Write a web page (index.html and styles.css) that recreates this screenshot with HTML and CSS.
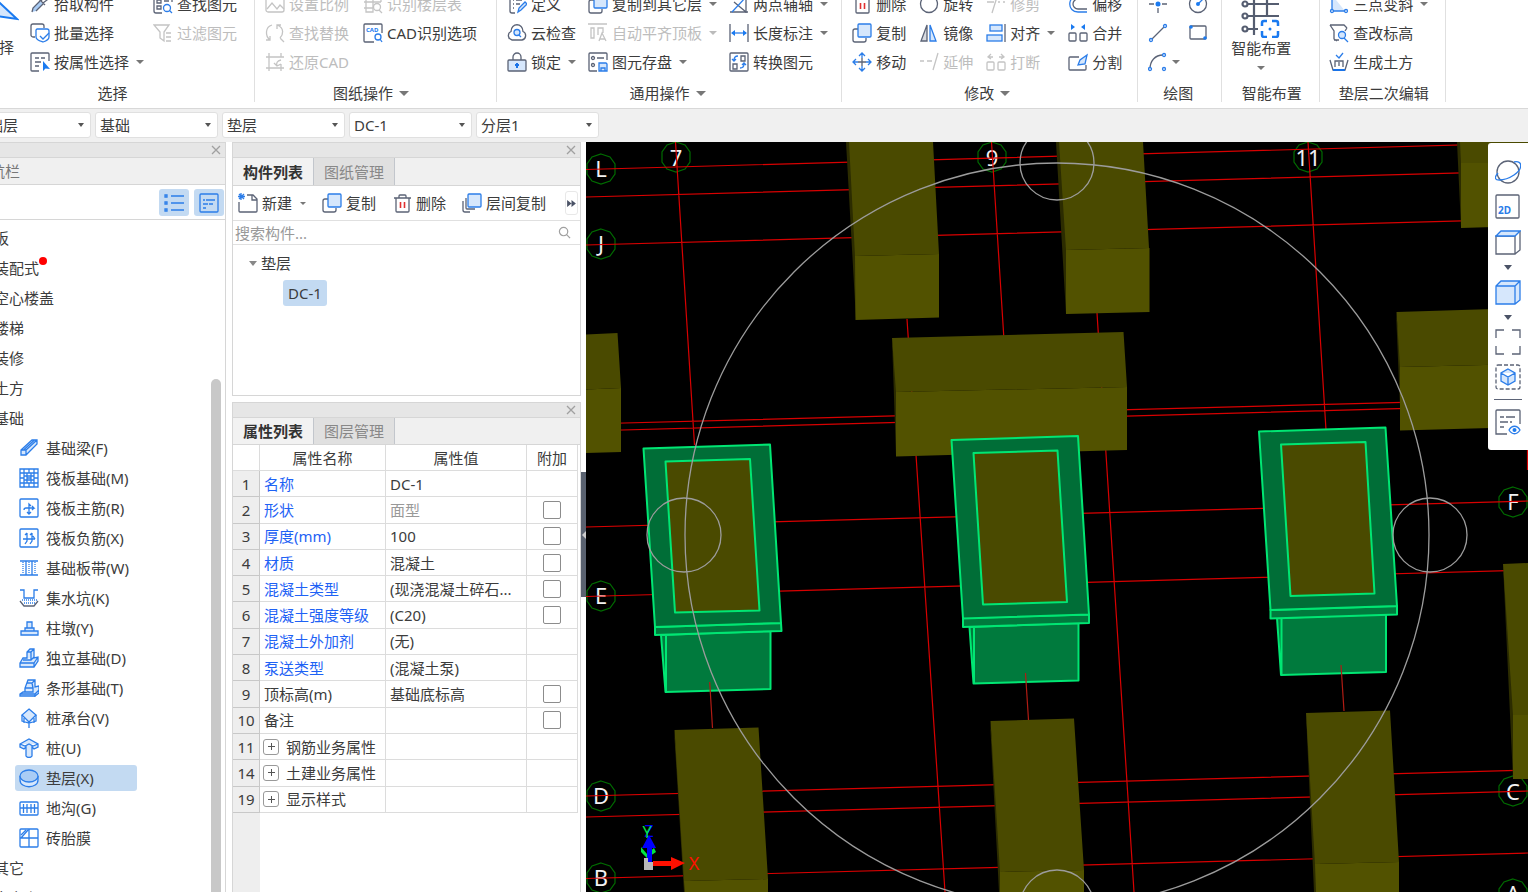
FILE: index.html
```html
<!DOCTYPE html>
<html lang="zh-CN">
<head>
<meta charset="utf-8">
<title>垫层建模</title>
<link rel="stylesheet" href="styles.css">
</head>
<body>
<svg class="sprite" aria-hidden="true">
  <defs>
    <symbol id="pick" viewBox="0 0 20 20"><path class="bf" d="M2 18l1-4 7-7 3 3-7 7z"/><path class="k" d="M9 5l6 6M11 7l3-4 3 3-4 3M2 18l1-4 7-7M6 17l7-7"/></symbol>
    <symbol id="batch" viewBox="0 0 20 20"><path class="k" d="M5 14H3a2 2 0 0 1-2-2V3a2 2 0 0 1 2-2h9a2 2 0 0 1 2 2v2"/><path class="b w" d="M7 6h10a2 2 0 0 1 2 2v6c0 3-3 4-6 5-3-1-7-2-7-5V7z"/><path class="b" d="M10 13l3 3 6-6"/></symbol>
    <symbol id="byattr" viewBox="0 0 20 20"><path class="k" d="M19 9V2a1 1 0 0 0-1-1H2a1 1 0 0 0-1 1v16a1 1 0 0 0 1 1h7M5 6h4M11 6h4M5 10h6M5 14h4"/><path class="bs" d="M13 9v10l2.500-2.500L20 17z"/></symbol>
    <symbol id="find" viewBox="0 0 20 20"><path class="k" d="M19 8V2H1v15a2 2 0 0 0 2 2h6M4 6h4v3H4zM4 12h4v3H4zM11 7h5"/><circle class="b" cx="14" cy="14" r="3.500"/><path class="b" d="M16.500 16.500L19 19"/></symbol>
    <symbol id="filter" viewBox="0 0 20 20"><path class="g" d="M1 2h15l-5 7v9l-4-3V9zM13 10h5M13 14h5M13 18h5"/></symbol>
    <symbol id="scale" viewBox="0 0 20 20"><rect class="g" x="1" y="2" width="18" height="16" rx="2"/><path class="g" d="M2 15l5-6 5 6 3-4 4 4"/></symbol>
    <symbol id="level" viewBox="0 0 20 20"><path class="g" d="M1 8h17M3 2h7v16H3zM18 2v6M1 14h9"/><circle class="g" cx="14" cy="13" r="3.500"/><path class="g" d="M16 16l3 3"/></symbol>
    <symbol id="swap" viewBox="0 0 20 20"><path class="g" d="M7 2C0 4 0 13 5 17M1 17h4v-4M12 2c8 3 6 10 3 13M12 6V2h4M15 15l4 4"/></symbol>
    <symbol id="cad" viewBox="0 0 20 20"><path class="k" d="M19 10V2a1 1 0 0 0-1-1H2a1 1 0 0 0-1 1v16a1 1 0 0 0 1 1h9"/><text class="tiny" x="3" y="9">CAD</text><circle class="b" cx="15" cy="14" r="3"/><path class="b" d="M17 16l2 3"/></symbol>
    <symbol id="restore" viewBox="0 0 20 20"><path class="g" d="M4 1v18M1 5h18M16 1v4M1 16h18M16 12v7M16 8c-4 1-5 3-4 6M9 11l3 3 4-2"/></symbol>
    <symbol id="define" viewBox="0 0 20 20"><path class="k" d="M15 2H3v15a2 2 0 0 0 2 2h3M6 6h1M9 6h6M6 10h1M9 10h4M6 14h1"/><path class="b f" d="M11 18l1-4 6-6 2 2-6 6z"/></symbol>
    <symbol id="cloud" viewBox="0 0 20 20"><path class="k" d="M5 17a4.500 4.500 0 0 1-1-8.500C4-.500 16-.500 16 8.500a4.500 4.500 0 0 1-1 8.500z"/><circle class="b f" cx="10" cy="9.500" r="3"/><path class="b" d="M12 12l2 2"/></symbol>
    <symbol id="lock" viewBox="0 0 20 20"><path class="k" d="M6 8V5a4 4 0 0 1 8 0v3"/><rect class="k f" x="1" y="8" width="18" height="11" rx="1"/><path class="b2" d="M10 11v5M8 13h4"/></symbol>
    <symbol id="copy" viewBox="0 0 20 20"><path class="k" d="M6 6H3a2 2 0 0 0-2 2v9a2 2 0 0 0 2 2h9a2 2 0 0 0 2-2v-2"/><rect class="b f" x="6" y="1" width="13" height="13" rx="1"/></symbol>
    <symbol id="flat" viewBox="0 0 20 20"><path class="g" d="M0 1h19M3 5h3v10H3zM10 12V5h5v5M11 18l3-8 4 8M12 16h5"/></symbol>
    <symbol id="save" viewBox="0 0 20 20"><path class="k" d="M19 8V2a1 1 0 0 0-1-1H2a1 1 0 0 0-1 1v16a1 1 0 0 0 1 1h7M9 6h7"/><circle class="k" cx="5" cy="6" r="1.500"/><circle class="k" cx="5" cy="13" r="1.500"/><path class="b f" d="M11 11h7l1 1v7h-8zM13 19v-3h4v3"/></symbol>
    <symbol id="axis" viewBox="0 0 20 20"><path class="k" d="M1 18h18M17 1v18M5 8l12 10"/><path class="b" d="M3 18L17 3"/></symbol>
    <symbol id="length" viewBox="0 0 20 20"><path class="k" d="M1 1v18M19 1v18"/><path class="b" d="M3 10h14"/><path class="bs" d="M2 10l4-3v6zM18 10l-4-3v6z"/></symbol>
    <symbol id="convert" viewBox="0 0 20 20"><rect class="k" x="1" y="1" width="18" height="18" rx="1"/><path class="k" d="M12 4h4v5h-4zM4 12h4v5H4z"/><path class="b" d="M9 4C6 4 5 6 5 8M3 7l2 2 2-2M11 16c3 0 4-2 4-4M13 13l2-2 2 2"/></symbol>
    <symbol id="trash" viewBox="0 0 20 20"><path class="k" d="M2 5h17M7 5V3a1 1 0 0 1 1-1h5a1 1 0 0 1 1 1v2M4 5v13a1 1 0 0 0 1 1h11a1 1 0 0 0 1-1V5"/><path class="r" d="M8.500 9v6M12.500 9v6"/></symbol>
    <symbol id="rotate" viewBox="0 0 20 20"><circle class="k" cx="10" cy="10" r="8.500"/></symbol>
    <symbol id="mirror" viewBox="0 0 20 20"><path class="k gf" d="M8 2v16H2z"/><path class="b f" d="M11 2v16h6z"/></symbol>
    <symbol id="move" viewBox="0 0 20 20"><path class="k" d="M10 6v8M6 10h8"/><path class="b" d="M10 1v5M7 4l3-3 3 3M10 19v-5M7 16l3 3 3-3M1 10h5M4 7l-3 3 3 3M19 10h-5M16 7l3 3-3 3"/></symbol>
    <symbol id="trim" viewBox="0 0 20 20"><path class="g" d="M1 8h7M12 8h2M17 8h2M11 3L6 19"/></symbol>
    <symbol id="extend" viewBox="0 0 20 20"><path class="g" d="M1 9h4M8 9h5M19 1l-5 17"/></symbol>
    <symbol id="align" viewBox="0 0 20 20"><rect class="b f" x="4" y="2" width="12" height="6"/><rect class="b f" x="1" y="12" width="15" height="6"/><path class="k" d="M19 1v18"/></symbol>
    <symbol id="break" viewBox="0 0 20 20"><rect class="g" x="1" y="10" width="7" height="8" rx="1"/><rect class="g" x="12" y="10" width="7" height="8" rx="1"/><path class="g" d="M7 5H3M5 2L2 5l3 2M13 5h4M15 2l3 3-3 2"/></symbol>
    <symbol id="offset" viewBox="0 0 20 20"><path class="k" d="M19 5h-9a5 5 0 0 0 0 10h9"/><path class="b" d="M19 2h-9C-1 2-1 18 10 18h9"/></symbol>
    <symbol id="merge" viewBox="0 0 20 20"><rect class="k" x="1" y="10" width="7" height="8" rx="1"/><rect class="k" x="12" y="10" width="7" height="8" rx="1"/><path class="bs" d="M3 1l4 3-4 3zM17 1l-4 3 4 3z"/></symbol>
    <symbol id="split" viewBox="0 0 20 20"><path class="k" d="M11 5H2a1 1 0 0 0-1 1v11a1 1 0 0 0 1 1h15a1 1 0 0 0 1-1v-4"/><path class="b f" d="M10 13l2-5 7-5-2 9z"/></symbol>
    <symbol id="point" viewBox="0 0 20 20"><path class="k" d="M10 0v6M10 14v5M1 10h5M14 10h5"/><circle class="bs" cx="10" cy="10" r="2.500"/></symbol>
    <symbol id="circle" viewBox="0 0 20 20"><circle class="k" cx="10" cy="10" r="8.500"/><path class="b" d="M10 10l6-6"/><circle class="bs" cx="10" cy="10" r="2"/></symbol>
    <symbol id="line" viewBox="0 0 20 20"><path class="k" d="M3 17L17 3"/><circle class="b w" cx="3" cy="17" r="1.500"/><circle class="b w" cx="17" cy="3" r="1.500"/></symbol>
    <symbol id="rect" viewBox="0 0 20 20"><rect class="k" x="2" y="3" width="16" height="13" rx="1"/><circle class="bs" cx="3" cy="4" r="1.800"/><circle class="bs" cx="17" cy="15" r="1.800"/></symbol>
    <symbol id="arc" viewBox="0 0 20 20"><path class="k" d="M2 17C2 9 7 3 15 3"/><circle class="b w" cx="2" cy="17" r="1.500"/><circle class="b w" cx="16" cy="3" r="1.500"/><circle class="b w" cx="16" cy="17" r="1.500"/></symbol>
    <symbol id="slope" viewBox="0 0 20 20"><path class="f" d="M3 1L16 17H3z"/><path class="b" d="M3 0v17h13"/><circle class="b w" cx="3" cy="17" r="1.500"/><circle class="b w" cx="17" cy="17" r="1.500"/></symbol>
    <symbol id="elev" viewBox="0 0 20 20"><path class="k" d="M1 2h14l3 3M1 2l4 6v8l3 2M18 5l-2 3M5 17h5"/><circle class="b f" cx="13" cy="12" r="3.500"/><path class="b" d="M15 15l4 4"/></symbol>
    <symbol id="earth" viewBox="0 0 20 20"><path class="k" d="M1 8l3 10h12l3-10M6 15V9h8v6M10 10v4"/><path class="b2" d="M4 18h12"/><path class="b" d="M7 3l3 3 4-5"/></symbol>
    <symbol id="x" viewBox="0 0 10 10"><path class="xk" d="M1 1l8 8M9 1L1 9"/></symbol>
    <symbol id="new" viewBox="0 0 20 20"><path class="k" d="M1 9v9a1 1 0 0 0 1 1h16a1 1 0 0 0 1-1V6l-4-4H9M14 2v5h5"/><path class="b" d="M3 0v7M0 3.500h7M1 1l5 5M6 1L1 6"/></symbol>
    <symbol id="layers" viewBox="0 0 20 20"><path class="k" d="M4 5v10a1 1 0 0 0 1 1h8M1 8v9a2 2 0 0 0 2 2h5"/><rect class="b f" x="6" y="1" width="13" height="13" rx="1"/></symbol>
    <symbol id="mag" viewBox="0 0 14 14"><circle class="xk" cx="6" cy="6" r="4.500"/><path class="xk" d="M9 9l4 4"/></symbol>
    <symbol id="n1" viewBox="0 0 20 20"><path class="b f" d="M2 12L13 2h5v4L7 17H2zM2 12h5v5M7 12L18 2M4.500 12L15.500 2"/></symbol>
    <symbol id="n2" viewBox="0 0 20 20"><path class="b" d="M1 1h18v18H1zM1 5h18M1 10h4M8 10h4M15 10h4M1 15h18M5 1v18M10 1v4M10 15v4M15 1v18M8 5v10M12 5v10M5 8h10M5 12h10"/></symbol>
    <symbol id="n3" viewBox="0 0 20 20"><rect class="b" x="1" y="1" width="18" height="18" rx="1"/><path class="b" d="M10 15V6l2 2M5 12c0-2 1-2 2-2h8l-2-2M15 10l-2 2M8 14l2 2 2-2"/></symbol>
    <symbol id="n4" viewBox="0 0 20 20"><rect class="b" x="1" y="1" width="18" height="18" rx="1"/><path class="b" d="M4 11h12M8 5v8l-2 3M13 5v8l-2 3M6 7l2-2M11 7l2-2M14 8l2 3"/></symbol>
    <symbol id="n5" viewBox="0 0 20 20"><path class="b" d="M1 3h18M1 17h18M7 3v14M13 3v14"/><path class="b dash" d="M4 4v12M10 4v12M16 4v12"/></symbol>
    <symbol id="n6" viewBox="0 0 20 20"><path class="b" d="M1 2h4v8h10V2h4"/><path class="b dash" d="M3 12h15M5 15h11"/><path class="k" d="M1 13l4 5h10l4-5"/></symbol>
    <symbol id="n7" viewBox="0 0 20 20"><path class="b f" d="M2 13h17v4H2zM6 13v-3h9v3M8 10V4h5v6"/></symbol>
    <symbol id="n8" viewBox="0 0 20 20"><path class="b f" d="M1 15l3-5h4V4l3-3h4v9l4-1v4l-4 6H1zM1 15h14v4M15 15l4-6M8 4h4v8M12 4l3-3M4 12h8l3-3"/></symbol>
    <symbol id="n9" viewBox="0 0 20 20"><path class="b f" d="M1 16l3-2h2v-4l3-8h7v7l4-1v7l-4 3H1zM1 16h15v3M16 16l4-4M6 10h8v4H4M8 5h5l3-3M13 5l1 5"/></symbol>
    <symbol id="n10" viewBox="0 0 20 20"><path class="b f" d="M10 1l7 6-7 7-7-7z"/><path class="b" d="M3 7v6l7 2 7-2V7M10 14v6M5 10v5M15 10v5"/></symbol>
    <symbol id="n11" viewBox="0 0 20 20"><path class="b f" d="M1 6l9-5 9 5v3l-4 2-2-2v9c-1 2-5 2-6 0V9l-2 2-4-2zM1 6l5 2 4-2 4 2 5-2"/></symbol>
    <symbol id="n12" viewBox="0 0 20 20"><path class="b f" d="M1 8v4c0 9 18 9 18 0V8"/><ellipse class="b f2" cx="10" cy="8" rx="9" ry="6"/></symbol>
    <symbol id="n13" viewBox="0 0 20 20"><rect class="b" x="1" y="4" width="18" height="13" rx="1"/><path class="b" d="M1 10h18M4.500 6v9M8 6v9M12 6v9M15.500 6v9"/></symbol>
    <symbol id="n14" viewBox="0 0 20 20"><rect class="b" x="1" y="1" width="18" height="18" rx="1"/><path class="b" d="M10 1v18M1 10h18M2 7l5-5M2 10l7-8"/></symbol>
    <symbol id="v1" viewBox="0 0 20 20"><path class="b" d="M1 2h2v2H1zM1 9h2v2H1zM1 16h2v2H1zM7 3h13M7 10h13M7 17h13"/></symbol>
    <symbol id="v2" viewBox="0 0 20 20"><rect class="b" x="1" y="1" width="18" height="18" rx="1"/><path class="b" d="M4 7h2M7 7h9M4 11h5M10 11h4M4 15h3"/></symbol>
    <symbol id="orbit" viewBox="0 0 26 26"><circle class="k" cx="13" cy="13" r="11"/><path class="b" d="M3 14C-6 24 10 22 19 16S28 1 19 3"/></symbol>
    <symbol id="two" viewBox="0 0 26 26"><rect class="k" x="1" y="1" width="23" height="23" rx="1"/><text class="twod" x="3" y="20">2D</text></symbol>
    <symbol id="cube" viewBox="0 0 26 26"><path class="k" d="M1 7h19v18H1zM20 25l5-4V2"/><path class="b f" d="M1 7l5-5h19l-5 5z"/></symbol>
    <symbol id="cube2" viewBox="0 0 26 26"><path class="b f" d="M1 7l5-5h19v19l-5 4H1zM1 7h19v18M20 7l5-5"/></symbol>
    <symbol id="full" viewBox="0 0 26 26"><path class="k" d="M1 9V1h8M17 1h8v8M25 17v8h-8M9 25H1v-8"/></symbol>
    <symbol id="iso" viewBox="0 0 26 26"><rect class="k dash3" x="1" y="1" width="24" height="24" rx="2"/><path class="b f" d="M13 5l7 4v8l-7 4-7-4V9zM6 9l7 4 7-4M13 13v8"/></symbol>
    <symbol id="eye" viewBox="0 0 26 26"><path class="k" d="M25 15V2a1 1 0 0 0-1-1H2a1 1 0 0 0-1 1v23h11M5 8h4M11 8h9M5 13h8M15 13h2M5 18h4"/><path class="b w" d="M14 21c3-5 8-5 11 0-3 5-8 5-11 0z"/><circle class="bs" cx="19.500" cy="21" r="2"/></symbol>
    <symbol id="smart" viewBox="0 0 40 40"><path class="k2" d="M6 6h32M6 18h32M6 31h11M13 0v37M26 0v18"/><circle class="k2 w" cx="4" cy="6" r="2.500"/><circle class="k2 w" cx="4" cy="18" r="2.500"/><circle class="k2 w" cx="4" cy="31" r="2.500"/><path class="b3" d="M26 23h-3a2 2 0 0 0-2 2v3M31 23h4a2 2 0 0 1 2 2v3M37 33v4a2 2 0 0 1-2 2h-4M26 39h-3a2 2 0 0 1-2-2v-4"/><circle class="bs" cx="29" cy="31" r="1.500"/></symbol>
    <symbol id="bubble" viewBox="-16 -16 32 32"><path class="ring" d="M0-15l9 3 5 7v10l-5 7-9 3-9-3-5-7V-5l5-7z"/></symbol>
  </defs>
</svg>

<header class="ribbon">
  <section class="group first">
    <div class="tools">
      <button class="big select"><svg class="cursor" viewBox="0 0 40 40"><path class="cur" d="M8 2v34l10-9 20 3z"/></svg><span>选择</span></button>
      <div class="col">
        <button class="tool"><svg><use href="#pick"/></svg>拾取构件</button>
        <button class="tool"><svg><use href="#batch"/></svg>批量选择</button>
        <button class="tool drop"><svg><use href="#byattr"/></svg>按属性选择</button>
      </div>
      <div class="col">
        <button class="tool"><svg><use href="#find"/></svg>查找图元</button>
        <button class="tool off"><svg><use href="#filter"/></svg>过滤图元</button>
      </div>
    </div>
    <h2>选择</h2>
  </section>
  <section class="group drawings">
    <div class="tools">
      <div class="col">
        <button class="tool off"><svg><use href="#scale"/></svg>设置比例</button>
        <button class="tool off"><svg><use href="#swap"/></svg>查找替换</button>
        <button class="tool off"><svg><use href="#restore"/></svg>还原CAD</button>
      </div>
      <div class="col">
        <button class="tool off"><svg><use href="#level"/></svg>识别楼层表</button>
        <button class="tool"><svg><use href="#cad"/></svg>CAD识别选项</button>
      </div>
    </div>
    <h2 class="more">图纸操作</h2>
  </section>
  <section class="group common">
    <div class="tools">
      <div class="col">
        <button class="tool"><svg><use href="#define"/></svg>定义</button>
        <button class="tool"><svg><use href="#cloud"/></svg>云检查</button>
        <button class="tool drop"><svg><use href="#lock"/></svg>锁定</button>
      </div>
      <div class="col">
        <button class="tool drop"><svg><use href="#copy"/></svg>复制到其它层</button>
        <button class="tool drop off"><svg><use href="#flat"/></svg>自动平齐顶板</button>
        <button class="tool drop"><svg><use href="#save"/></svg>图元存盘</button>
      </div>
      <div class="col">
        <button class="tool drop"><svg><use href="#axis"/></svg>两点辅轴</button>
        <button class="tool drop"><svg><use href="#length"/></svg>长度标注</button>
        <button class="tool"><svg><use href="#convert"/></svg>转换图元</button>
      </div>
    </div>
    <h2 class="more">通用操作</h2>
  </section>
  <section class="group modify">
    <div class="tools">
      <div class="col">
        <button class="tool"><svg><use href="#trash"/></svg>删除</button>
        <button class="tool"><svg><use href="#copy"/></svg>复制</button>
        <button class="tool"><svg><use href="#move"/></svg>移动</button>
      </div>
      <div class="col">
        <button class="tool"><svg><use href="#rotate"/></svg>旋转</button>
        <button class="tool"><svg><use href="#mirror"/></svg>镜像</button>
        <button class="tool off"><svg><use href="#extend"/></svg>延伸</button>
      </div>
      <div class="col">
        <button class="tool off"><svg><use href="#trim"/></svg>修剪</button>
        <button class="tool drop"><svg><use href="#align"/></svg>对齐</button>
        <button class="tool off"><svg><use href="#break"/></svg>打断</button>
      </div>
      <div class="col">
        <button class="tool"><svg><use href="#offset"/></svg>偏移</button>
        <button class="tool"><svg><use href="#merge"/></svg>合并</button>
        <button class="tool"><svg><use href="#split"/></svg>分割</button>
      </div>
    </div>
    <h2 class="more">修改</h2>
  </section>
  <section class="group draw">
    <div class="tools">
      <div class="col">
        <button class="tool" aria-label="点"><svg><use href="#point"/></svg></button>
        <button class="tool" aria-label="直线"><svg><use href="#line"/></svg></button>
        <button class="tool drop" aria-label="弧"><svg><use href="#arc"/></svg></button>
      </div>
      <div class="col">
        <button class="tool" aria-label="圆"><svg><use href="#circle"/></svg></button>
        <button class="tool" aria-label="矩形"><svg><use href="#rect"/></svg></button>
      </div>
    </div>
    <h2>绘图</h2>
  </section>
  <section class="group smart">
    <div class="tools">
      <button class="big drop"><svg><use href="#smart"/></svg><span>智能布置</span></button>
    </div>
    <h2>智能布置</h2>
  </section>
  <section class="group last">
    <div class="tools">
      <div class="col">
        <button class="tool drop"><svg><use href="#slope"/></svg>三点变斜</button>
        <button class="tool"><svg><use href="#elev"/></svg>查改标高</button>
        <button class="tool"><svg><use href="#earth"/></svg>生成土方</button>
      </div>
    </div>
    <h2>垫层二次编辑</h2>
  </section>
</header>

<div class="context">
  <label class="combo"><select aria-label="楼层"><option>基础层</option></select></label>
  <label class="combo"><select aria-label="构件分类"><option>基础</option></select></label>
  <label class="combo"><select aria-label="构件类型"><option>垫层</option></select></label>
  <label class="combo"><select aria-label="构件"><option>DC-1</option></select></label>
  <label class="combo"><select aria-label="分层"><option>分层1</option></select></label>
</div>

<main class="work">
  <nav class="panel nav">
    <div class="bar"><button aria-label="关闭导航栏"><svg><use href="#x"/></svg></button></div>
    <div class="nav-title"><span>模块导航栏</span></div>
    <div class="views">
      <button aria-label="列表视图"><svg><use href="#v1"/></svg></button>
      <button aria-label="图标视图"><svg><use href="#v2"/></svg></button>
    </div>
    <div class="nav-body">
      <ul class="tree">
        <li class="top">板</li>
        <li class="top"><span class="dot">装配式</span></li>
        <li class="top">空心楼盖</li>
        <li class="top">楼梯</li>
        <li class="top">装修</li>
        <li class="top">土方</li>
        <li class="top">基础</li>
        <li><a href="#"><svg><use href="#n1"/></svg>基础梁(F)</a></li>
        <li><a href="#"><svg><use href="#n2"/></svg>筏板基础(M)</a></li>
        <li><a href="#"><svg><use href="#n3"/></svg>筏板主筋(R)</a></li>
        <li><a href="#"><svg><use href="#n4"/></svg>筏板负筋(X)</a></li>
        <li><a href="#"><svg><use href="#n5"/></svg>基础板带(W)</a></li>
        <li><a href="#"><svg><use href="#n6"/></svg>集水坑(K)</a></li>
        <li><a href="#"><svg><use href="#n7"/></svg>柱墩(Y)</a></li>
        <li><a href="#"><svg><use href="#n8"/></svg>独立基础(D)</a></li>
        <li><a href="#"><svg><use href="#n9"/></svg>条形基础(T)</a></li>
        <li><a href="#"><svg><use href="#n10"/></svg>桩承台(V)</a></li>
        <li><a href="#"><svg><use href="#n11"/></svg>桩(U)</a></li>
        <li><a href="#" class="on"><svg><use href="#n12"/></svg>垫层(X)</a></li>
        <li><a href="#"><svg><use href="#n13"/></svg>地沟(G)</a></li>
        <li><a href="#"><svg><use href="#n14"/></svg>砖胎膜</a></li>
        <li class="top">其它</li>
        <li class="top">自定义</li>
      </ul>
      <div class="track"><div class="thumb"></div></div>
    </div>
  </nav>

  <div class="middle">
    <section class="panel list">
      <div class="bar"><button aria-label="关闭构件列表"><svg><use href="#x"/></svg></button></div>
      <div class="tabs"><button class="on">构件列表</button><button>图纸管理</button></div>
      <div class="actions">
        <button class="tool drop"><svg><use href="#new"/></svg>新建</button>
        <button class="tool"><svg><use href="#copy"/></svg>复制</button>
        <button class="tool"><svg><use href="#trash"/></svg>删除</button>
        <button class="tool"><svg><use href="#layers"/></svg>层间复制</button>
        <button class="overflow" aria-label="更多"><svg viewBox="0 0 10 8"><path d="M0 0l5 4-5 4zM5 0l5 4-5 4z"/></svg></button>
      </div>
      <div class="search"><input type="text" placeholder="搜索构件..." aria-label="搜索构件"><svg><use href="#mag"/></svg></div>
      <div class="parts">
        <div class="parent">垫层</div>
        <button class="part">DC-1</button>
      </div>
    </section>

    <section class="panel props">
      <div class="bar"><button aria-label="关闭属性列表"><svg><use href="#x"/></svg></button></div>
      <div class="tabs"><button class="on">属性列表</button><button>图层管理</button></div>
      <div class="sheet">
        <table>
          <colgroup><col class="c-no"><col class="c-name"><col class="c-val"><col class="c-add"></colgroup>
          <thead><tr><th></th><th>属性名称</th><th>属性值</th><th>附加</th></tr></thead>
          <tbody>
            <tr><td>1</td><td class="hl">名称</td><td>DC-1</td><td></td></tr>
            <tr><td>2</td><td class="hl">形状</td><td class="ro">面型</td><td><input type="checkbox" aria-label="附加 形状"></td></tr>
            <tr><td>3</td><td class="hl">厚度(mm)</td><td>100</td><td><input type="checkbox" aria-label="附加 厚度"></td></tr>
            <tr><td>4</td><td class="hl">材质</td><td>混凝土</td><td><input type="checkbox" aria-label="附加 材质"></td></tr>
            <tr><td>5</td><td class="hl">混凝土类型</td><td>(现浇混凝土碎石...</td><td><input type="checkbox" aria-label="附加 混凝土类型"></td></tr>
            <tr><td>6</td><td class="hl">混凝土强度等级</td><td>(C20)</td><td><input type="checkbox" aria-label="附加 混凝土强度等级"></td></tr>
            <tr><td>7</td><td class="hl">混凝土外加剂</td><td>(无)</td><td></td></tr>
            <tr><td>8</td><td class="hl">泵送类型</td><td>(混凝土泵)</td><td></td></tr>
            <tr><td>9</td><td>顶标高(m)</td><td>基础底标高</td><td><input type="checkbox" aria-label="附加 顶标高"></td></tr>
            <tr><td>10</td><td>备注</td><td></td><td><input type="checkbox" aria-label="附加 备注"></td></tr>
            <tr><td>11</td><td><button class="plus" aria-label="展开"></button>钢筋业务属性</td><td></td><td></td></tr>
            <tr><td>14</td><td><button class="plus" aria-label="展开"></button>土建业务属性</td><td></td><td></td></tr>
            <tr><td>19</td><td><button class="plus" aria-label="展开"></button>显示样式</td><td></td><td></td></tr>
          </tbody>
        </table>
      </div>
    </section>
  </div>

  <div class="splitter"><button aria-label="收起面板"></button></div>

  <section class="view">
    <svg class="scene" viewBox="586 142 942 750" preserveAspectRatio="xMinYMin slice">
      <g class="tags">
        <use href="#bubble" x="585" y="153" width="32" height="32"/><text x="601" y="177">L</text>
        <use href="#bubble" x="585" y="228" width="32" height="32"/><text x="601" y="252">J</text>
        <use href="#bubble" x="585" y="580" width="32" height="32"/><text x="601" y="604">E</text>
        <use href="#bubble" x="585" y="780" width="32" height="32"/><text x="601" y="804">D</text>
        <use href="#bubble" x="585" y="862" width="32" height="32"/><text x="601" y="886">B</text>
        <use href="#bubble" x="660" y="141" width="32" height="32"/><text x="676" y="166">7</text>
        <use href="#bubble" x="976" y="141" width="32" height="32"/><text x="992" y="166">9</text>
        <use href="#bubble" x="1292" y="141" width="32" height="32"/><text x="1308" y="166">11</text>
        <use href="#bubble" x="1497" y="486" width="32" height="32"/><text x="1513" y="510">F</text>
        <use href="#bubble" x="1497" y="775" width="32" height="32"/><text x="1513" y="800">C</text>
        <use href="#bubble" x="1497" y="878" width="32" height="32"/><text x="1513" y="902">A</text>
      </g>
      <path class="grid" d="M586 169.500L1528 143M586 197L1528 171M586 245L1528 219M586 424L1528 399M586 431L1528 405M586 527L1528 501M586 596.500L1528 570M586 796L1528 770M586 817L1528 791M586 878.500L1528 853M675.500 142L694.500 445M907 319L945 892M991.500 142L1004 340M1097 313L1134 892M1308 142L1326 430M1527.500 448v22"/>
      <g class="side">
        <path d="M846 142h6l6 120-2 58zM1056 142h6l6 120-2 52zM1457 142h6v85h-2zM892 338l6 50-2 68zM1396 312l6 50-1 68zM674 730l10 162h6V870zM990 721l9 171h6V860zM1306 713l8 179h6V850zM1503 564l10 215h4V700z"/>
      </g>
      <g class="roof">
        <path d="M849 142h84l6 112-84 2zM1059 142h84l6 106-83 2zM1460 142h68v21h-67zM586 334.500l31.500-1.500L621 388l-35 1.500zM892 338l231.500-6 3.500 55-231 5zM1396.500 312L1528 308v56l-128 3zM674.500 730l84-2.500L768 879l-84 2zM990.500 721l83.500-2.500L1084 870l-84 2zM1306 713l84-2.500 9 151.500-84 2zM1503 564l25-1v152h-15z"/>
      </g>
      <g class="front">
        <path d="M855 256l84-2v63.500l-83.500 2.500zM1066 250l83.500-2v64l-83.500 2zM1461 163h67v63l-67 2zM586 389.500l35-1.500v64l-35 1zM896 392l231-5v63l-231 6.500zM1400 367l128-3v63l-128 3.500zM684 881l84-2v13h-83zM1000 872l84-2v22h-84zM1315 864l84-2v30h-83zM1513 715h15v64h-15z"/>
      </g>
      <g class="pad">
        <g>
          <path class="wall" d="M661 635l109.500-4V689l-105 3zM666 635v57"/>
          <path class="wall" d="M655 627l126-4 .500 8-126.500 4z"/>
          <path class="lid" d="M643.500 448.500L770 444.500l11 178.500-126 4z"/>
          <path class="hole" d="M665.500 461.500L750 459l9.500 151.500-84.500 2z"/>
        </g>
        <g>
          <path class="wall" d="M969.500 627l109-4v57.500l-105 3zM974 627v57"/>
          <path class="wall" d="M963 618l126-3.500v8.500l-126 4z"/>
          <path class="lid" d="M951.500 440l126.500-4 11 178.500-126 4z"/>
          <path class="hole" d="M973.500 453l84-2.500 9.500 151.500-84 2.500z"/>
        </g>
        <g>
          <path class="wall" d="M1277 618l109-4v58l-105 3zM1281.500 618v57"/>
          <path class="wall" d="M1270.500 610l126.500-4v8.500l-126.500 4z"/>
          <path class="lid" d="M1259 431.500l126.500-4L1397 606l-126.500 4z"/>
          <path class="hole" d="M1281 444.500l84.500-2.500 9 151.500-84 2.500z"/>
        </g>
      </g>
      <path class="grid dim" d="M709.700 682l2.800 46M1025.500 673l3 47M1341 665l3 46"/>
      <g class="orbit">
        <circle cx="1057" cy="535" r="372"/><circle cx="1057" cy="163" r="37"/><circle cx="684" cy="535" r="37"/><circle cx="1430" cy="535" r="37"/><circle cx="1057" cy="907" r="37"/>
      </g>
      <g class="triad">
        <text class="tz" x="649" y="837">Z</text><text class="ty" x="647" y="838">Y</text>
        <path class="yg" d="M641 847l6 7 7-6 2 4-9 6-6-6z"/>
        <path class="zb" d="M649 835l7 13h-4v14h-5v-14h-5z"/>
        <path class="xr" d="M653 861h18v-4l14 6-14 7v-4h-18z"/>
        <path class="cubelet" d="M644 858h4v4h5v8h-9z"/>
        <text class="tx" x="694" y="870">X</text>
      </g>
    </svg>
    <div class="dock">
      <button aria-label="动态观察"><svg><use href="#orbit"/></svg></button>
      <button aria-label="二维"><svg><use href="#two"/></svg></button>
      <button aria-label="视图方向"><svg><use href="#cube"/></svg></button>
      <button class="down" aria-label="更多视图方向"></button>
      <button aria-label="实体显示"><svg><use href="#cube2"/></svg></button>
      <button class="down" aria-label="更多显示方式"></button>
      <button aria-label="全屏"><svg><use href="#full"/></svg></button>
      <button aria-label="局部三维"><svg><use href="#iso"/></svg></button>
      <hr>
      <button aria-label="显示设置"><svg><use href="#eye"/></svg></button>
    </div>
  </section>
</main>
</body>
</html>
```

FILE: styles.css
```css
* { box-sizing: border-box; }
body {
  margin: 0;
  height: 100vh;
  display: flex;
  flex-direction: column;
  overflow: hidden;
  background: #fff;
  color: #3c3c3c;
  font: 15px/20px "Noto Sans", "Noto Sans CJK SC", sans-serif;
}
button, select, input { font: inherit; color: inherit; margin: 0; padding: 0; border: 0; background: none; }
button { white-space: nowrap; }
h2, ul { margin: 0; padding: 0; font: inherit; list-style: none; }
a { color: inherit; text-decoration: none; }
svg { display: block; flex: none; }
.sprite { position: absolute; width: 0; height: 0; }

/* icon strokes and fills */
.k, .b, .g, .r, .k2, .b2, .b3, .xk { fill: none; stroke-width: 1.3; }
.k { stroke: #5b6376; }
.k2 { stroke: #555d70; stroke-width: 2.2; }
.b { stroke: #2b7de9; }
.b2 { stroke: #1a73e8; stroke-width: 2; }
.b3 { stroke: #1a7af0; stroke-width: 2.5; }
.g { stroke: #c4c4c4; }
.r { stroke: #e03030; stroke-width: 1.6; }
.xk { stroke: #a0a0a0; }
.f { fill: #d6e7fc; }
.f2 { fill: #a9ccf5; }
.w { fill: #fff; }
.gf { fill: #d8dbe0; }
.bs { fill: #1a7af0; }
.bf { fill: #a9ccf5; }
.dash { stroke-dasharray: 1 1; }
.dash3 { stroke-dasharray: 4 2; }
.tiny { font: bold 6px "Noto Sans", sans-serif; fill: #1a7af0; }
.twod { font: bold 10px "Noto Sans", sans-serif; fill: #2b7de9; }
.cur { fill: #d6e7fc; stroke: #1a7af0; stroke-width: 2; }

/* ribbon */
.ribbon {
  display: flex;
  flex: none;
  margin-top: -11px;
  padding-bottom: 6px;
  border-bottom: 1px solid #d8d8d8;
  overflow: hidden;
}
.group {
  flex: none;
  padding: 0 17px 0 10px;
  border-right: 1px solid #e0e0e0;
}
.group.first { margin-left: -31px; padding-left: 15px; }
.group.common { padding-right: 13px; }
.group.drawings { padding-right: 19px; }
.group.modify { padding-right: 15px; }
.tools { display: flex; gap: 12px; height: 88px; }
.first .tools { gap: 9px; }
.modify .tools { gap: 13px; }
.drawings .tools { gap: 14px; }
.draw .tools { gap: 5px; }
.col { display: flex; flex-direction: column; align-items: flex-start; }
.tool { display: flex; align-items: center; gap: 4px; height: 29px; }
.tool svg { width: 20px; height: 20px; }
.off { color: #bdbdbd; }
.drop::after, .more::after, .down::after, .combo::after {
  content: "";
  border: 4px solid transparent;
  border-top: 4px solid #777;
  border-bottom: 0;
}
.tool.drop::after { margin-left: 3px; }
.draw .drop::after { margin-left: 0; }
.off.drop::after { border-top-color: #bbb; }
.group h2 { display: flex; align-items: center; justify-content: center; gap: 6px; height: 25px; padding-top: 7px; }
.first h2 { padding-left: 4px; }
.more::after { border-width: 5px 5px 0; }
.big { display: flex; flex-direction: column; align-items: center; }
.big svg { width: 40px; height: 40px; }
.select { width: 30px; margin-right: 7px; gap: 8px; }
.draw .tools { gap: 8px; }
.draw { padding-right: 13px; }
.smart, .last { padding: 0 17px 0 9px; }
.smart { min-width: 98px; }
.smart h2, .last h2 { padding-left: 8px; margin-right: -2px; }
.smart .big { padding-top: 9px; }
.smart .big::after { margin-top: 8px; }

/* context selectors */
.context {
  display: flex;
  flex: none;
  gap: 4px;
  height: 33px;
  padding: 3px 0 4px;
  margin-left: -32px;
  background: #f0f0f0;
}
.combo { position: relative; width: 123px; }
.combo select { appearance: none; width: 100%; height: 26px; padding: 0 4px; border: 1px solid #e0e0e0; border-radius: 3px; background: #fff; }
.combo::after { position: absolute; right: 7px; top: 11px; border-width: 4px 3px 0; border-top-color: #555; pointer-events: none; }

/* work area */
.work { display: grid; grid-template-columns: 226px 355px 5px minmax(0, 1fr); flex: 1; min-height: 0; }
.panel { border: 1px solid #d6d6d6; background: #fff; display: flex; flex-direction: column; min-height: 0; overflow: hidden; }
.bar { display: flex; flex: none; justify-content: flex-end; align-items: center; height: 14px; padding-right: 4px; background: #e6e6e6; }
.bar svg { width: 10px; height: 10px; }
.nav { border-left: 0; border-bottom: 0; }
.nav-title { flex: none; height: 28px; padding-top: 3px; background: #f0f0f0; border: solid #d6d6d6; border-width: 1px 0; color: #777; }
.nav-title span { display: block; margin-left: -55px; }
.views { display: flex; flex: none; justify-content: flex-end; gap: 5px; height: 35px; padding: 4px 1px 0; border-bottom: 1px solid #d6d6d6; }
.views button { display: grid; place-items: center; width: 30px; height: 27px; border-radius: 3px; background: #c3daf2; }
.views svg { width: 20px; height: 20px; }
.nav-body { display: flex; flex: 1; min-height: 0; padding: 3px 4px 0 0; }
.tree { flex: 1; min-width: 0; }
.tree li { display: flex; align-items: center; height: 30px; }
.tree .top { margin-left: -6px; }
.tree a { display: flex; align-items: center; gap: 7px; height: 26px; min-width: 122px; margin-left: 15px; padding-left: 4px; border-radius: 3px; }
.tree a svg { width: 20px; height: 20px; }
.tree .on { background: #c3daf2; }
.dot { position: relative; }
.dot::after { content: ""; position: absolute; right: -8px; top: -1px; width: 8px; height: 8px; border-radius: 50%; background: #f00; }
.track { width: 10px; padding-top: 156px; }
.thumb { height: 100%; border-radius: 5px 5px 0 0; background: #c8c8c8; }

.middle { display: grid; grid-template-rows: 254px minmax(0, 1fr); gap: 6px; padding-left: 6px; min-height: 0; }
.tabs { display: flex; flex: none; height: 29px; border: solid #d6d6d6; border-width: 1px 0; background: #f0f0f0; }
.tabs button { width: 81px; border-right: 1px solid #c2c6cc; background: #e0e0e0; color: #888; }
.tabs .on { background: #f2f2f2; color: #333; font-weight: bold; }
.actions { display: flex; flex: none; align-items: center; gap: 16px; height: 35px; padding-left: 5px; border-bottom: 1px solid #e0e0e0; }
.actions .drop::after { border-width: 3px 3px 0; margin-left: 4px; }
.overflow { display: grid; place-items: center; width: 13px; height: 24px; margin: 0 2px 0 auto; border: 1px solid #e8e8e8; border-radius: 3px; fill: #4a5266; }
.overflow svg { width: 9px; height: 7px; }
.search { display: flex; flex: none; align-items: center; height: 24px; padding: 0 9px 0 2px; border-bottom: 1px solid #e0e0e0; }
.search input { flex: 1; min-width: 0; height: 22px; outline: 0; }
.search input::placeholder { color: #999; opacity: 1; }
.search svg { width: 13px; height: 13px; }
.parts { padding: 5px 16px; }
.parent { display: flex; align-items: center; gap: 4px; height: 26px; margin-bottom: 4px; }
.parent::before { content: ""; border: solid transparent; border-width: 5px 4px 0; border-top-color: #888; }
.part { height: 26px; margin-left: 34px; padding: 0 5px; border-radius: 3px; background: #c3daf2; }

.props { border-bottom: 0; }
.props .tabs { height: 28px; }
.sheet { flex: 1; min-height: 0; background: linear-gradient(90deg, #eee 27px, #fff 27px); }
table { width: calc(100% - 2px); height: 368px; table-layout: fixed; border-collapse: separate; border-spacing: 0; background: #fff; }
.c-no { width: 27px; }
.c-name { width: 126px; }
.c-add { width: 51px; }
th, td { padding: 0 0 0 4px; border: solid #dcdcdc; border-width: 0 1px 1px 0; font-weight: normal; text-align: left; white-space: nowrap; overflow: hidden; line-height: 20px; }
th { height: 26px; padding: 0; text-align: center; }
td:first-child { padding: 0; background: #eee; border-color: #c8c8c8; text-align: center; }
td:last-child { padding: 0; text-align: center; }
.hl { color: #1e62f5; }
.ro { color: #999; }
td input { appearance: none; display: block; width: 18px; height: 18px; margin: 0 auto; border: 1px solid #8c8c8c; border-radius: 2px; background: #fff; }
.plus {
  width: 16px;
  height: 16px;
  margin: 0 7px 0 -1px;
  border: 1px solid #999;
  border-radius: 3px;
  vertical-align: -1px;
  background: linear-gradient(#555, #555) center / 7px 1px no-repeat, linear-gradient(#555, #555) center / 1px 7px no-repeat;
}

.splitter { padding-top: 330px; }
.splitter button { display: flex; align-items: center; justify-content: flex-end; width: 5px; height: 125px; background: #5a6270; }
.splitter button::after { content: ""; border: solid transparent; border-width: 4px 4px 4px 0; border-right-color: #ccc; }

/* 3D view */
.view { position: relative; min-width: 0; min-height: 0; overflow: hidden; background: #000; }
.scene { width: 100%; height: 100%; }
.grid { fill: none; stroke: #d80000; stroke-width: 1.2; }
.dim { stroke: #b01c14; }
.ring { fill: none; stroke: #006c00; stroke-width: 1.2; }
.tags text { fill: #f2f2f2; font: 22px "Noto Sans", sans-serif; text-anchor: middle; }
.side { fill: #2c2c00; }
.roof { fill: #4a4a00; }
.front { fill: #525200; }
.pad path { stroke: #00e673; stroke-width: 2; stroke-linejoin: round; }
.pad .wall { fill: #007a3d; }
.pad .lid { fill: #006e37; }
.pad .hole { fill: #4a4a00; }
.scene .orbit { fill: none; stroke: #9c9c9c; stroke-width: 1.3; }
.triad text { font: 18px "Noto Sans", sans-serif; text-anchor: middle; }
.tz, .zb { fill: #0000ff; }
.ty, .yg { fill: #00e640; }
.tx, .xr { fill: #ff1000; }
.triad .tz, .triad .ty { font-size: 16px; }
.cubelet { fill: #b8b8b8; }
.dock {
  position: absolute;
  top: 1px;
  right: 0;
  width: 40px;
  display: flex;
  flex-direction: column;
  align-items: center;
  gap: 9px;
  padding: 16px 0 15px;
  border-radius: 3px 0 0 3px;
  background: #fff;
}
.dock svg { width: 26px; height: 26px; }
.dock hr { width: 28px; height: 1px; margin: 0; border: 0; background: #5b6376; }
.down { display: grid; place-items: center; width: 10px; height: 6px; }
.down::after { border-top-color: #4a5266; border-width: 5px 4px 0; }
```
